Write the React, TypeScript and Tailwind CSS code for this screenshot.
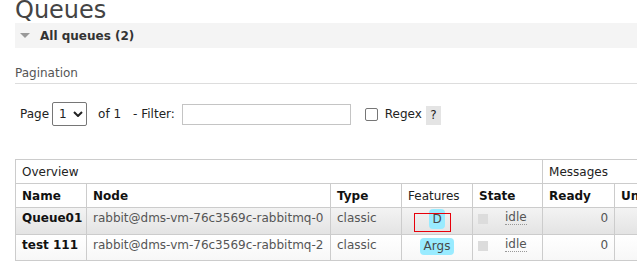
import { FC } from "react";

type Row = {
  name: string;
  node: string;
  type: string;
  feature: string;
  state: string;
  ready: number;
  alt: boolean;
  marked: boolean;
};

const rows: Row[] = [
  {
    name: "Queue01",
    node: "rabbit@dms-vm-76c3569c-rabbitmq-0",
    type: "classic",
    feature: "D",
    state: "idle",
    ready: 0,
    alt: true,
    marked: true,
  },
  {
    name: "test 111",
    node: "rabbit@dms-vm-76c3569c-rabbitmq-2",
    type: "classic",
    feature: "Args",
    state: "idle",
    ready: 0,
    alt: false,
    marked: false,
  },
];

const Pagination: FC = () => {
  return (
    <div className="ml-[20px] mt-[18px] flex h-[24px] items-center text-[#222]">
      <span>Page</span>
      <div className="ml-[3px] flex h-[24px] w-[35px] items-center rounded-[2px] border border-[#767676] bg-white pl-[6px]">
        <span>1</span>
        <svg width="10" height="6" viewBox="0 0 10 6" className="ml-[6px]">
          <polyline points="1,1 5,5 9,1" fill="none" stroke="#222" strokeWidth="2" />
        </svg>
      </div>
      <span className="ml-[11px]">of 1</span>
      <span className="ml-[12px]">- Filter:</span>
      <div className="ml-[7px] h-[21px] w-[169px] border border-[#c4c4c4] bg-white" />
      <div className="ml-[14px] h-[13px] w-[13px] rounded-[2px] border border-[#767676] bg-white" />
      <span className="ml-[7px]">Regex</span>
      <span className="ml-[4px] mt-[2px] flex h-[19px] w-[15px] items-center justify-center bg-[#e4e4e4]">?</span>
    </div>
  );
};

const QueueTable: FC = () => {
  const th = "border border-[#ccc] px-[6px] text-left font-bold text-[#111]";
  return (
    <table className="ml-[15px] mt-[33px] w-[760px] table-fixed border-collapse">
      <colgroup>
        <col className="w-[71px]" />
        <col className="w-[244px]" />
        <col className="w-[71px]" />
        <col className="w-[71px]" />
        <col className="w-[70px]" />
        <col className="w-[72px]" />
        <col className="w-[80px]" />
        <col className="w-[81px]" />
      </colgroup>
      <thead>
        <tr className="h-[24px]">
          <th colSpan={5} className="border border-[#ccc] px-[6px] text-left font-normal text-[#222]">
            Overview
          </th>
          <th colSpan={3} className="border border-[#ccc] px-[6px] text-left font-normal text-[#222]">
            Messages
          </th>
        </tr>
        <tr className="h-[24px]">
          <th className={th}>Name</th>
          <th className={th}>Node</th>
          <th className={th}>Type</th>
          <th className="border border-[#ccc] px-[6px] text-left font-normal text-[#222]">Features</th>
          <th className={th}>State</th>
          <th className={th}>Ready</th>
          <th className={th}>Unacked</th>
          <th className={th}>Total</th>
        </tr>
      </thead>
      <tbody>
        {rows.map((r) => (
          <tr
            key={r.name}
            className={
              r.alt
                ? "h-[27px] bg-gradient-to-b from-[#f3f3f3] to-[#e3e3e3]"
                : "h-[26px] bg-gradient-to-b from-[#ffffff] to-[#f7f7f7]"
            }
          >
            <td className="border border-[#ccc] px-[6px] pt-[3px] align-top font-bold text-[#111]">{r.name}</td>
            <td className="border border-[#ccc] px-[6px] pt-[3px] align-top text-[#555]">{r.node}</td>
            <td className="border border-[#ccc] px-[6px] pt-[3px] align-top text-[#555]">{r.type}</td>
            <td className="relative border border-[#ccc] px-[6px] pt-[3px] align-top">
              <div className="flex justify-center">
                {r.marked ? (
                  <span className="-mt-[2px] h-[20px] rounded-[4px] bg-[#99ebff] px-[3px] leading-[20px] text-[#484848]">
                    {r.feature}
                  </span>
                ) : (
                  <span className="h-[17px] rounded-[4px] bg-[#99ebff] px-[4px] leading-[17px] text-[#484848]">
                    {r.feature}
                  </span>
                )}
              </div>
              {r.marked && (
                <div className="absolute left-[12px] top-[5px] h-[19px] w-[37px] border border-solid border-red-600" />
              )}
            </td>
            <td className="border border-[#ccc] px-[5px] pt-[3px] align-top text-[#555]">
              <div className="flex items-start">
                <div className="mt-[3px] h-[10px] w-[10px] bg-[#dcdcdc]" />
                <span className="ml-[17px] border-b border-dotted border-[#999] leading-[13px]">{r.state}</span>
              </div>
            </td>
            <td className="border border-[#ccc] px-[6px] pt-[3px] text-right align-top text-[#555]">{r.ready}</td>
            <td className="border border-[#ccc] px-[6px] pt-[3px] text-right align-top text-[#555]">0</td>
            <td className="border border-[#ccc] px-[6px] pt-[3px] text-right align-top text-[#555]">0</td>
          </tr>
        ))}
      </tbody>
    </table>
  );
};

export default function App() {
  return (
    <div className="h-[267px] w-[637px] overflow-hidden bg-white font-['DejaVu_Sans',Verdana,sans-serif] text-[12px] leading-[14px] text-[#333]">
      <h1 className="-mt-[2px] pl-[15px] text-[24px] leading-[24px] text-[#444]">Queues</h1>
      <div className="ml-[15px] mt-[1px] flex h-[25px] items-center bg-[#f4f4f4]">
        <svg width="10" height="5" viewBox="0 0 10 5" className="ml-[5px]">
          <polygon points="0,0 10,0 5,5" fill="#999" />
        </svg>
        <span className="ml-[10px] font-bold text-[#333]">All queues (2)</span>
      </div>
      <div className="ml-[15px] mt-[18px] border-b border-[#ddd] pb-[3px] text-[#555]">Pagination</div>
      <Pagination />
      <QueueTable />
    </div>
  );
}
